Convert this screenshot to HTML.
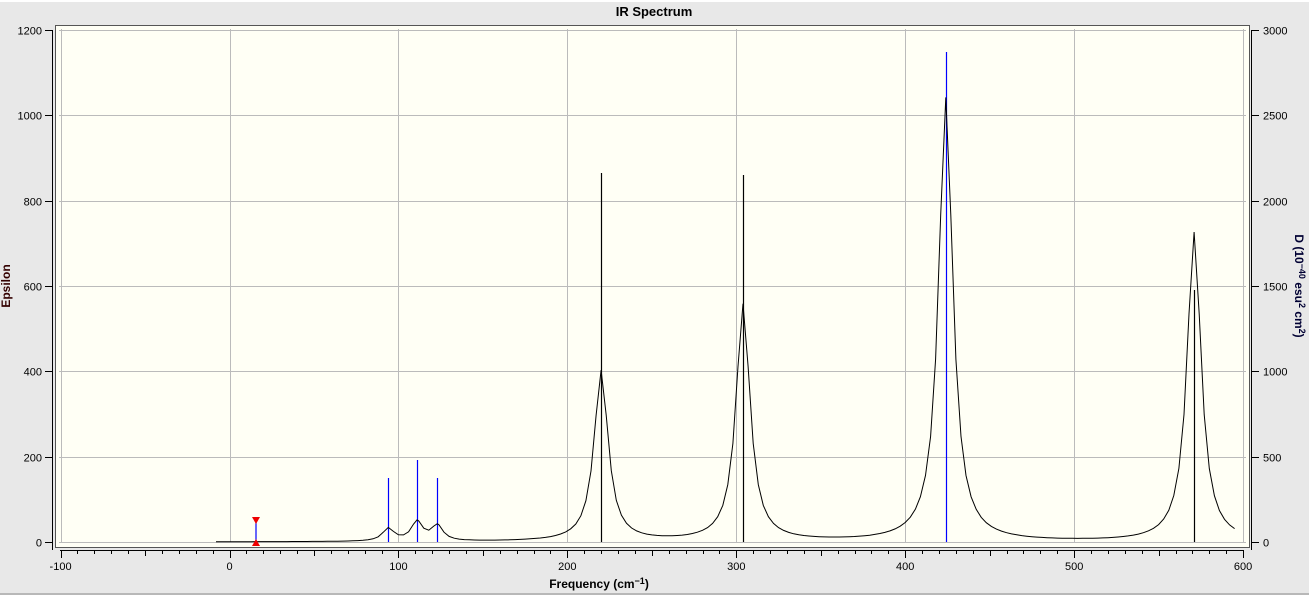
<!DOCTYPE html>
<html><head><meta charset="utf-8"><style>
html,body{margin:0;padding:0;width:1309px;height:595px;overflow:hidden;background:#e8e8e8;font-family:"Liberation Sans",sans-serif}
svg{position:absolute;left:0;top:0}
</style></head><body>
<svg id="s" width="1309" height="595" xmlns="http://www.w3.org/2000/svg" font-family="Liberation Sans, sans-serif">
<line x1="0" y1="1" x2="1309" y2="1" stroke="#fff" stroke-width="2"/>
<line x1="0" y1="594" x2="1309" y2="594" stroke="#888" stroke-width="1"/>
<text x="654" y="16" font-size="13" font-weight="bold" text-anchor="middle">IR Spectrum</text>
<rect x="55.5" y="25.5" width="1194" height="522" fill="#fffff5" stroke="#555" stroke-width="1"/>
<g id="grid" stroke="#bbb" stroke-width="1"></g>
<g id="axes" stroke="#000" stroke-width="1" fill="none"></g>
<g id="labels" font-size="11" fill="#000"></g>
<g id="sticks" stroke-width="1.2"></g>
<path id="curve" fill="none" stroke="#000" stroke-width="1"/>
<text x="599" y="588" font-size="12" font-weight="bold" text-anchor="middle">Frequency (cm<tspan font-size="9" dy="-4">−1</tspan><tspan dy="4">)</tspan></text>
<text transform="translate(10,286) rotate(-90)" font-size="12" font-weight="bold" text-anchor="middle" fill="#300">Epsilon</text>
<text transform="translate(1295,286) rotate(90)" font-size="12" font-weight="bold" text-anchor="middle" fill="#003">D (10<tspan font-size="9" dy="-4">−40</tspan><tspan dy="4"> esu</tspan><tspan font-size="9" dy="-4">2</tspan><tspan dy="4"> cm</tspan><tspan font-size="9" dy="-4">2</tspan><tspan dy="4">)</tspan></text>
<line x1="256" y1="520" x2="256" y2="542" stroke="#00f" stroke-width="1.2"/>
<polygon points="252,517 260,517 256,524" fill="#e00"/>
<polygon points="252,546 260,546 256,539" fill="#e00"/>
</svg>
<script>
var NS="http://www.w3.org/2000/svg";
function X(f){return 229.5+f*1.6893}
function Y(e){return 542-e*0.42667}
function el(p,t,a,txt){var e=document.createElementNS(NS,t);for(var k in a)e.setAttribute(k,a[k]);if(txt!=null)e.textContent=txt;document.getElementById(p).appendChild(e);}
for(var f=-100;f<=600;f+=100){var x=Math.round(X(f))+.5;el("grid","line",{x1:x,y1:29,x2:x,y2:543});}
for(var e=0;e<=1200;e+=200){var y=Math.round(Y(e))+.5;el("grid","line",{x1:59,y1:y,x2:1246,y2:y});}
// left axis
el("axes","line",{x1:52.5,y1:30,x2:52.5,y2:550});
for(var e=0;e<=1200;e+=200){var y=Math.round(Y(e))+.5;el("axes","line",{x1:45,y1:y,x2:53,y2:y});el("labels","text",{x:42,y:y+4,"text-anchor":"end"},""+e);}
// right axis
el("axes","line",{x1:1251.5,y1:30,x2:1251.5,y2:550});
for(var d=0;d<=3000;d+=500){var y=Math.round(542-d*512/3000)+.5;el("axes","line",{x1:1251,y1:y,x2:1259,y2:y});el("labels","text",{x:1263,y:y+4},""+d);}
// bottom axis
el("axes","line",{x1:60,y1:550.5,x2:1244,y2:550.5});
for(var f=-100;f<=600;f+=10){var x=Math.round(X(f))+.5;var l=(f%100==0)?8:(f%50==0?6:4);el("axes","line",{x1:x,y1:550,x2:x,y2:550+l});}
for(var f=-100;f<=600;f+=100){el("labels","text",{x:X(f),y:570,"text-anchor":"middle"},""+(f<0?"-100":f));}
// sticks
var st=[[94,478,"#00f"],[111,460,"#00f"],[123,478,"#00f"],[220,173,"#000"],[304,175,"#000"],[424,52,"#00f"],[571,290,"#000"]];
st.forEach(function(s){var x=Math.round(X(s[0]))+.5;el("sticks","line",{x1:x,y1:s[1],x2:x,y2:542,stroke:s[2]});});
// curve
var pk=[[94,30,4],[111,45,4],[123,36,4],[220,400,5],[304,555,5],[424,1040,5],[571,725,5]];
function v(f){var s=0;pk.forEach(function(p){var d=(f-p[0])/p[2];s+=p[1]/(1+d*d);});return s;}
var pts=[];for(var f=-8;f<=595;f+=3){pts.push(f);}pk.forEach(function(p){pts.push(p[0]);});pts.sort(function(a,b){return a-b});
var d="";pts.forEach(function(f,i){d+=(i?"L":"M")+X(f).toFixed(1)+","+Y(v(f)).toFixed(1);});
document.getElementById("curve").setAttribute("d",d);
</script>
</body></html>
